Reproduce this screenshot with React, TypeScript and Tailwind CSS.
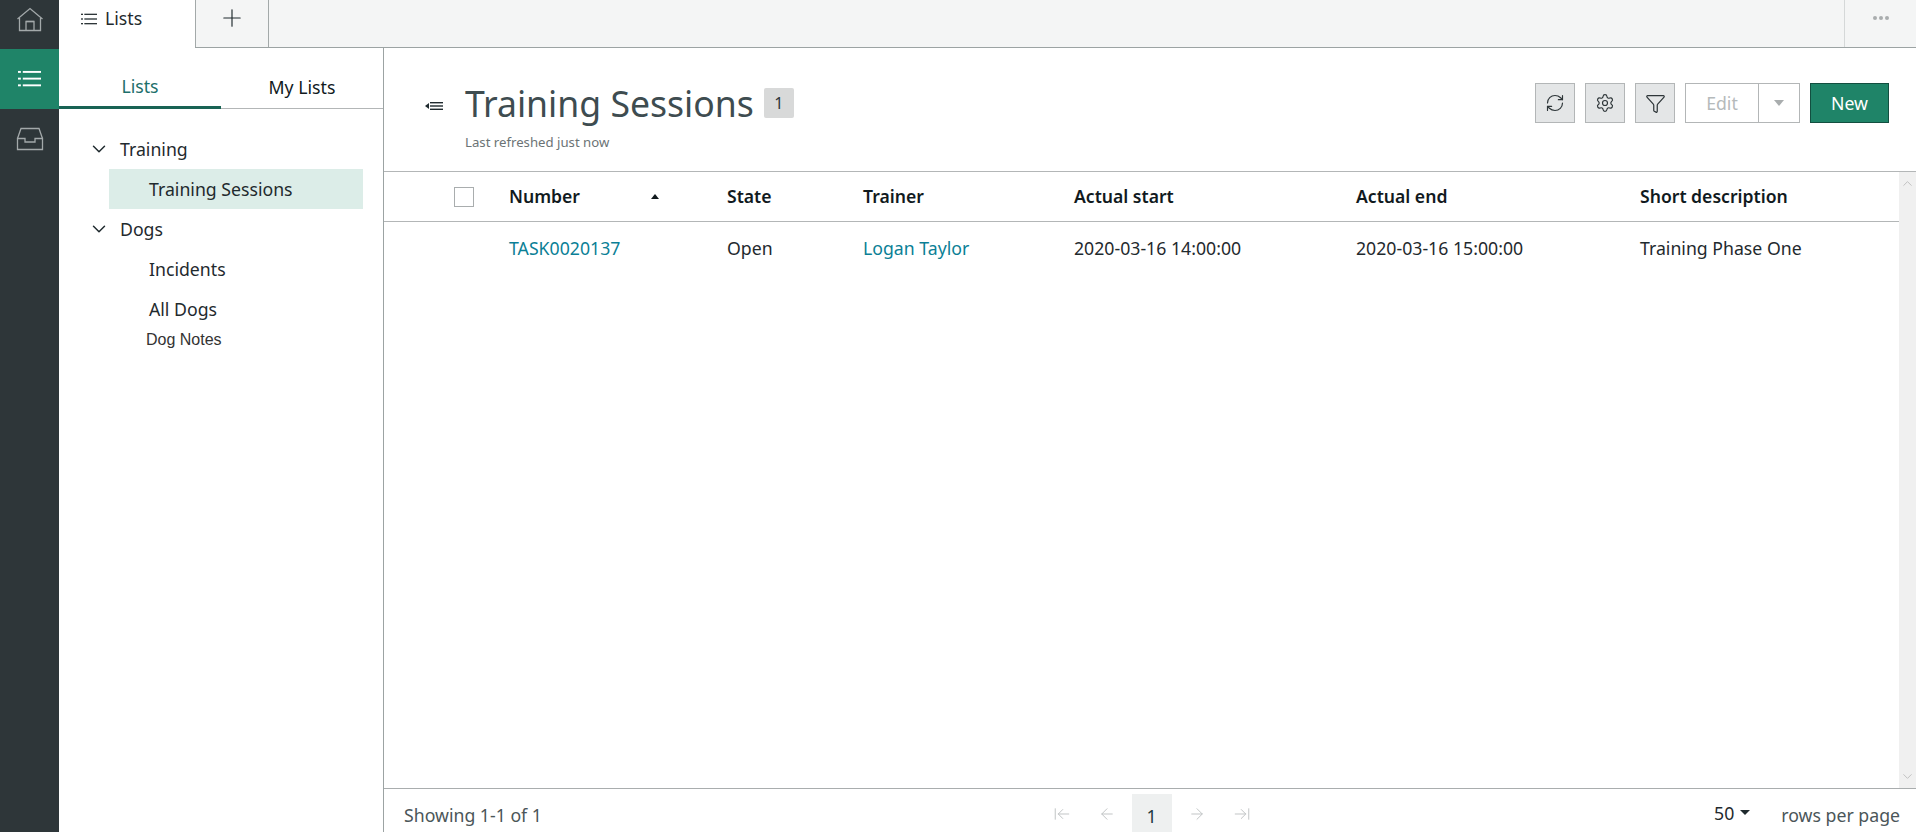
import { ArrowLeft, ArrowLeftToLine, ArrowRight, ArrowRightToLine, ChevronDown, ChevronUp, Filter, Plus, RefreshCw, Settings } from "lucide-react"

const font = "font-['Noto_Sans',sans-serif]"

const columns = ["Number", "State", "Trainer", "Actual start", "Actual end", "Short description"]

function HomeIcon() {
  return (
    <svg width="28" height="28" viewBox="0 0 28 28" fill="none" stroke="#a3a9aa" strokeWidth="1.3">
      <path d="M1.5 14 14 3.5 26.5 14" />
      <path d="M3.5 13v12.5h21V13" />
      <path d="M10 25.5v-9h8v9" />
      <path d="M10 16.5h8" />
    </svg>
  )
}

function InboxIcon() {
  return (
    <svg width="28" height="24" viewBox="0 0 28 24" fill="none" stroke="#a3a9aa" strokeWidth="1.3">
      <path d="M1.5 11.5 5 1.5h18l3.5 10" />
      <path d="M1.5 11.5v11h25v-11H19v3.5H9v-3.5z" />
    </svg>
  )
}

function ListIcon({ size, color }: { size: number; color: string }) {
  return (
    <svg width={size} height={size * 0.75} viewBox="0 0 24 18" fill={color}>
      <rect x="0" y="1" width="3" height="2" />
      <rect x="5" y="1" width="19" height="2" />
      <rect x="0" y="8" width="3" height="2" />
      <rect x="5" y="8" width="19" height="2" />
      <rect x="0" y="15" width="3" height="2" />
      <rect x="5" y="15" width="19" height="2" />
    </svg>
  )
}

function TreeItem({ label, selected }: { label: string; selected?: boolean }) {
  return (
    <div className={`h-10 ml-[50px] mr-5 pl-10 flex items-center text-[17.7px] text-[#1f2a2e] ${selected ? "bg-[#dcede8]" : ""}`}>
      {label}
    </div>
  )
}

function TreeGroup({ label }: { label: string }) {
  return (
    <div className="h-10 pl-[29px] flex items-center gap-[10px] text-[17.7px] text-[#1f2a2e]">
      <ChevronDown size={22} strokeWidth={1.6} color="#1f2a2e" />
      {label}
    </div>
  )
}

function IconButton({ children }: { children: React.ReactNode }) {
  return (
    <button className="w-10 h-10 flex items-center justify-center bg-[#e4e6e7] border border-[#b3b6b7]">
      {children}
    </button>
  )
}

export default function App() {
  return (
    <div className={`h-[832px] w-[1916px] flex overflow-hidden bg-white ${font}`}>
      <nav className="w-[59px] shrink-0 bg-[#2e3639] flex flex-col">
        <div className="h-[49px] pb-[12px] flex items-center justify-center">
          <HomeIcon />
        </div>
        <div className="h-[60px] bg-[#1f8468] flex items-center justify-center">
          <ListIcon size={23} color="#ffffff" />
        </div>
        <div className="h-[60px] flex items-center justify-center">
          <InboxIcon />
        </div>
      </nav>

      <div className="flex-1 flex flex-col min-w-0">
        <header className="h-12 flex bg-[#f4f5f5]">
          <div className="w-[136px] h-12 pb-[11px] bg-white flex items-center pl-[22px] gap-2 text-[17.7px] text-[#1f2a2e]">
            <ListIcon size={16} color="#2e3639" />
            Lists
          </div>
          <div className="flex-1 flex border-b border-[#9ca3a3]">
            <div className="w-[74px] pb-[11px] border-l border-r border-[#a3a9a9] flex items-center justify-center">
              <Plus size={28} strokeWidth={1} color="#1f2a2e" />
            </div>
            <div className="flex-1" />
            <div className="w-[72px] pb-[11px] border-l border-[#d5d8d8] flex items-center justify-center gap-[2px]">
              <span className="w-[4px] h-[4px] rounded-full bg-[#a9adae]" />
              <span className="w-[4px] h-[4px] rounded-full bg-[#a9adae]" />
              <span className="w-[4px] h-[4px] rounded-full bg-[#a9adae]" />
            </div>
          </div>
        </header>

        <div className="flex-1 flex min-h-0">
          <aside className="w-[325px] shrink-0 border-r border-[#9ca3a3]">
            <div className="h-[61px] flex text-[17.7px]">
              <div className="w-[162px] pt-[19px] flex items-center justify-center text-[#1d6f6b] border-b-[3px] border-[#186354]">Lists</div>
              <div className="flex-1 pt-[19px] flex items-center justify-center text-[#111a1e] border-b border-[#b3b6b7]">My Lists</div>
            </div>
            <div className="pt-5">
              <TreeGroup label="Training" />
              <TreeItem label="Training Sessions" selected />
              <TreeGroup label="Dogs" />
              <TreeItem label="Incidents" />
              <TreeItem label="All Dogs" />
              <div className="pl-[87px] -mt-[1px] font-['Liberation_Sans',sans-serif] text-[16px] text-[#333]">Dog Notes</div>
            </div>
          </aside>

          <main className="flex-1 flex flex-col min-w-0">
            <section className="h-[124px] shrink-0 border-b border-[#b3b6b7] flex items-start justify-between pl-[41px] pr-[27px]">
              <div className="flex items-start pt-[30px]">
                <div className="w-[40px] pt-[23px]">
                  <svg width="18" height="10" viewBox="0 0 18 10" fill="#1f2a2e">
                    <path d="M0 5 4 2v6z" />
                    <rect x="5" y="1" width="13" height="1.4" />
                    <rect x="5" y="4.3" width="13" height="1.4" />
                    <rect x="5" y="7.6" width="13" height="1.4" />
                  </svg>
                </div>
                <div>
                  <div className="flex items-center gap-[10px]">
                    <h1 className="text-[35.6px] leading-[50px] font-normal text-[#3e4c50]">Training Sessions</h1>
                    <span className="w-[30px] h-[30px] rounded-[2px] bg-[#d8d9d9] flex items-center justify-center text-[16px] text-[#2e3639]">1</span>
                  </div>
                  <div className="mt-[4px] text-[13.2px] leading-5 text-[#6b7375]">Last refreshed just now</div>
                </div>
              </div>
              <div className="flex items-center gap-[10px] pt-[35px]">
                <IconButton><RefreshCw size={20} strokeWidth={1.4} color="#2e3639" /></IconButton>
                <IconButton><Settings size={20} strokeWidth={1.4} color="#2e3639" /></IconButton>
                <IconButton><Filter size={21} strokeWidth={1.4} color="#2e3639" /></IconButton>
                <div className="w-[115px] h-10 flex bg-white border border-[#b3b6b7]">
                  <div className="w-[73px] flex items-center justify-center text-[17.7px] text-[#b5babb] border-r border-[#b3b6b7]">Edit</div>
                  <div className="flex-1 flex items-center justify-center">
                    <span className="w-0 h-0 border-x-[5px] border-x-transparent border-t-[6px] border-t-[#a9adae]" />
                  </div>
                </div>
                <button className="w-[79px] h-10 bg-[#1f8468] border border-[#134f40] text-white text-[17.7px]">New</button>
              </div>
            </section>

            <section className="flex-1 flex min-h-0">
              <div className="flex-1 min-w-0">
                <div className="h-[50px] grid grid-cols-[125px_218px_136px_211px_282px_284px_1fr] border-b border-[#b3b6b7] text-[17.6px] font-semibold text-[#111a1e] items-center">
                  <div className="pl-[70px]">
                    <div className="w-5 h-5 border border-[#a9adae] bg-white" />
                  </div>
                  {columns.map((col, i) => (
                    <div key={col} className="flex items-center whitespace-nowrap">
                      {col}
                      {i === 0 && <span className="ml-[71px] w-0 h-0 border-x-[4px] border-x-transparent border-b-[5px] border-b-[#111a1e]" />}
                    </div>
                  ))}
                </div>
                <div className="h-[52px] grid grid-cols-[125px_218px_136px_211px_282px_284px_1fr] text-[17.7px] text-[#1f2a2e] items-center whitespace-nowrap">
                  <div />
                  <div className="text-[#0b7f96]">TASK0020137</div>
                  <div>Open</div>
                  <div className="text-[#0b7f96]">Logan Taylor</div>
                  <div>2020-03-16 14:00:00</div>
                  <div>2020-03-16 15:00:00</div>
                  <div>Training Phase One</div>
                </div>
              </div>
              <div className="w-[17px] shrink-0 bg-[#f0f0f0] flex flex-col items-center justify-between py-[4px]">
                <ChevronUp size={15} strokeWidth={1.6} color="#c2c2c2" />
                <ChevronDown size={15} strokeWidth={1.6} color="#c2c2c2" />
              </div>
            </section>

            <footer className="h-[44px] shrink-0 border-t border-[#a9adae] relative flex items-center justify-between pt-[9px] pl-5 pr-4 text-[17.7px]">
              <span className="text-[#4b5659]">Showing 1-1 of 1</span>
              <div className="absolute left-[655px] top-[5px] flex items-center text-[#c0c3c4]">
                <div className="w-[45px] pt-[2px] flex justify-center"><ArrowLeftToLine size={18} strokeWidth={1.3} /></div>
                <div className="w-[45px] pt-[2px] flex justify-center"><ArrowLeft size={18} strokeWidth={1.3} /></div>
                <div className="w-[45px] flex justify-center">
                  <div className="w-10 h-[38px] bg-[#eef0f0] flex items-center justify-center pt-[6px] text-[17.7px] text-[#1f3a40]">1</div>
                </div>
                <div className="w-[45px] pt-[2px] flex justify-center"><ArrowRight size={18} strokeWidth={1.3} /></div>
                <div className="w-[45px] pt-[2px] flex justify-center"><ArrowRightToLine size={18} strokeWidth={1.3} /></div>
              </div>
              <div className="flex items-center">
                <span className="text-[#1f2a2e] -mt-[4px]">50</span>
                <span className="ml-[6px] -mt-[4px] w-0 h-0 border-x-[5px] border-x-transparent border-t-[5px] border-t-[#1f2a2e]" />
                <span className="ml-[31px] text-[#4b5659]">rows per page</span>
              </div>
            </footer>
          </main>
        </div>
      </div>
    </div>
  )
}
